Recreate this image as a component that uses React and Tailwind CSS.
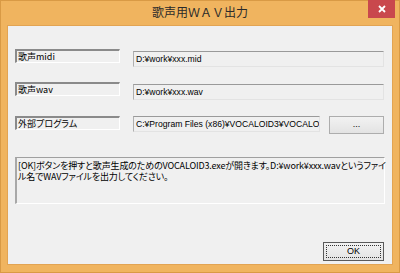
import React from 'react';

const jp = "font-['Noto_Sans_CJK_JP',sans-serif]";

const Label = ({ children }) => (
  <div className={`w-[105px] h-[14px] border-t-2 border-l-2 border-t-[#8a8a8a] border-l-[#8a8a8a] border-b border-r border-b-white border-r-white pl-[1px] text-[9px] leading-[11px] text-black ${jp} [font-feature-settings:'palt']`}>
    {children}
  </div>
);

const Field = ({ value, width = 'w-[251px]', className = '' }) => (
  <div className={`${width} h-[16px] border-t border-l border-t-[#9a9a9a] border-l-[#b0b0b0] border-b border-r border-b-[#e3e3e3] border-r-[#e3e3e3] bg-[#f0f0f0] pl-[2px] overflow-hidden whitespace-nowrap text-[8.6px] leading-[14px] text-black font-['Liberation_Sans','Noto_Sans_CJK_JP',sans-serif] ${className}`}>
    {value}
  </div>
);

export default function App() {
  return (
    <div className="w-[400px] h-[273px] bg-[#f0b45f] border border-[#d99a45] flex flex-col">
      {/* Title bar */}
      <div className="h-[24px] flex items-start relative">
        <div className={`flex-1 text-center text-[12px] leading-[22px] text-[#2a2a2a] ${jp}`}>
          歌声用ＷＡＶ出力
        </div>
        <div className="absolute right-[4px] top-[-1px] w-[27px] h-[18px] bg-[#c9484d] flex items-center justify-center">
          <svg width="8" height="8" viewBox="0 0 8 8">
            <path d="M1 1L7 7M7 1L1 7" stroke="white" strokeWidth="1.8" />
          </svg>
        </div>
      </div>

      {/* Client area */}
      <div className="mx-[6px] h-[240px] bg-[#f0f0f0] border border-[#e2a453] flex flex-col px-[7px] pt-[23px]">
        <div className="flex items-start">
          <Label>歌声midi</Label>
          <Field value="D:¥work¥xxx.mid" className="ml-[13px] mt-[2px]" />
        </div>
        <div className="flex items-start mt-[15px]">
          <Label>歌声wav</Label>
          <Field value="D:¥work¥xxx.wav" className="ml-[13px] mt-[2px]" />
        </div>
        <div className="flex items-start mt-[16px]">
          <Label>外部プログラム</Label>
          <Field value="C:¥Program Files (x86)¥VOCALOID3¥VOCALOI" width="w-[187px]" className="ml-[13px]" />
          <div className="ml-[9px] w-[55px] h-[18px] border border-[#adadad] bg-gradient-to-b from-[#f2f2f2] to-[#e3e3e3] flex items-center justify-center text-[9px] text-black font-['Liberation_Sans',sans-serif]">
            ...
          </div>
        </div>
        <div className={`mt-[23px] w-[370px] h-[47px] border-t border-l-2 border-t-[#a0a0a0] border-l-[#a8a8a8] border-b border-r border-b-white border-r-white pl-[1px] pt-[2px] text-[9px] leading-[11px] tracking-[-0.15px] text-black ${jp} [font-feature-settings:'palt']`}>
          <div className="whitespace-nowrap">[OK]ボタンを押すと歌声生成のためのVOCALOID3.exeが開きます。D:¥work¥xxx.wavというファイ</div>
          <div>ル名でWAVファイルを出力してください。</div>
        </div>
        <div className="flex justify-end mt-[38px] pr-[1px]">
          <div className="w-[61px] h-[19px] border border-[#5a5a5a] bg-gradient-to-b from-[#f2f2f2] to-[#e3e3e3] p-[2px]">
            <div className="w-full h-full border border-dotted border-[#333] flex items-center justify-center text-[9px] text-black font-['Liberation_Sans',sans-serif]">
              OK
            </div>
          </div>
        </div>
      </div>
    </div>
  );
}
